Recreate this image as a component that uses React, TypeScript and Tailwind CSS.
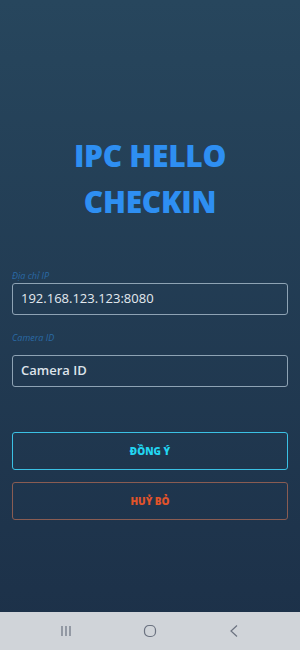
export default function App() {
  return (
    <div className="flex h-[650px] w-[300px] flex-col bg-gradient-to-b from-[#27465d] to-[#1c3048] font-['Open_Sans',sans-serif]">
      <div className="flex flex-1 flex-col px-3">
        {/* Title */}
        <div className="mt-[133px] flex flex-col items-center text-[30px] font-extrabold leading-[46px] tracking-[-0.3px] text-[#2e8ff2]">
          <span>IPC HELLO</span>
          <span>CHECKIN</span>
        </div>

        {/* IP */}
        <label className="mt-[44px] text-[9px] italic text-[#2a6aa6]">Địa chỉ IP</label>
        <div className="flex h-[32px] items-center rounded-[3px] border border-[#8ea3b4] px-2 text-[13px] text-[#e3e9ef]">
          192.168.123.123:8080
        </div>

        {/* Camera */}
        <label className="mt-[16px] text-[9px] italic text-[#2a6aa6]">Camera ID</label>
        <div className="mt-[11px] flex h-[32px] items-center rounded-[3px] border border-[#8ea3b4] px-2 text-[13px] font-semibold text-[#dde3ea]">
          Camera ID
        </div>

        {/* Buttons */}
        <button className="mt-[45px] flex h-[38px] items-center justify-center rounded-[3px] border border-[#3bc1e4] text-[10px] font-extrabold text-[#22d6f2]">
          ĐỒNG Ý
        </button>
        <button className="mt-[12px] flex h-[38px] items-center justify-center rounded-[3px] border border-[#8a5c52] text-[10px] font-extrabold text-[#e0532a]">
          HUỶ BỎ
        </button>
      </div>

      {/* Android nav bar */}
      <div className="flex h-[38px] items-center justify-around bg-[#d0d4d9] px-6 text-[#6b7280]">
        <svg width="14" height="14" viewBox="0 0 14 14" stroke="currentColor" strokeWidth="1.2" fill="none">
          <path d="M3 2v10M7 2v10M11 2v10" />
        </svg>
        <svg width="14" height="14" viewBox="0 0 14 14" stroke="currentColor" strokeWidth="1.2" fill="none">
          <rect x="1.5" y="1.5" width="11" height="11" rx="4.5" />
        </svg>
        <svg width="14" height="14" viewBox="0 0 14 14" stroke="currentColor" strokeWidth="1.2" fill="none">
          <path d="M10 1.5L4 7l6 5.5" />
        </svg>
      </div>
    </div>
  )
}
